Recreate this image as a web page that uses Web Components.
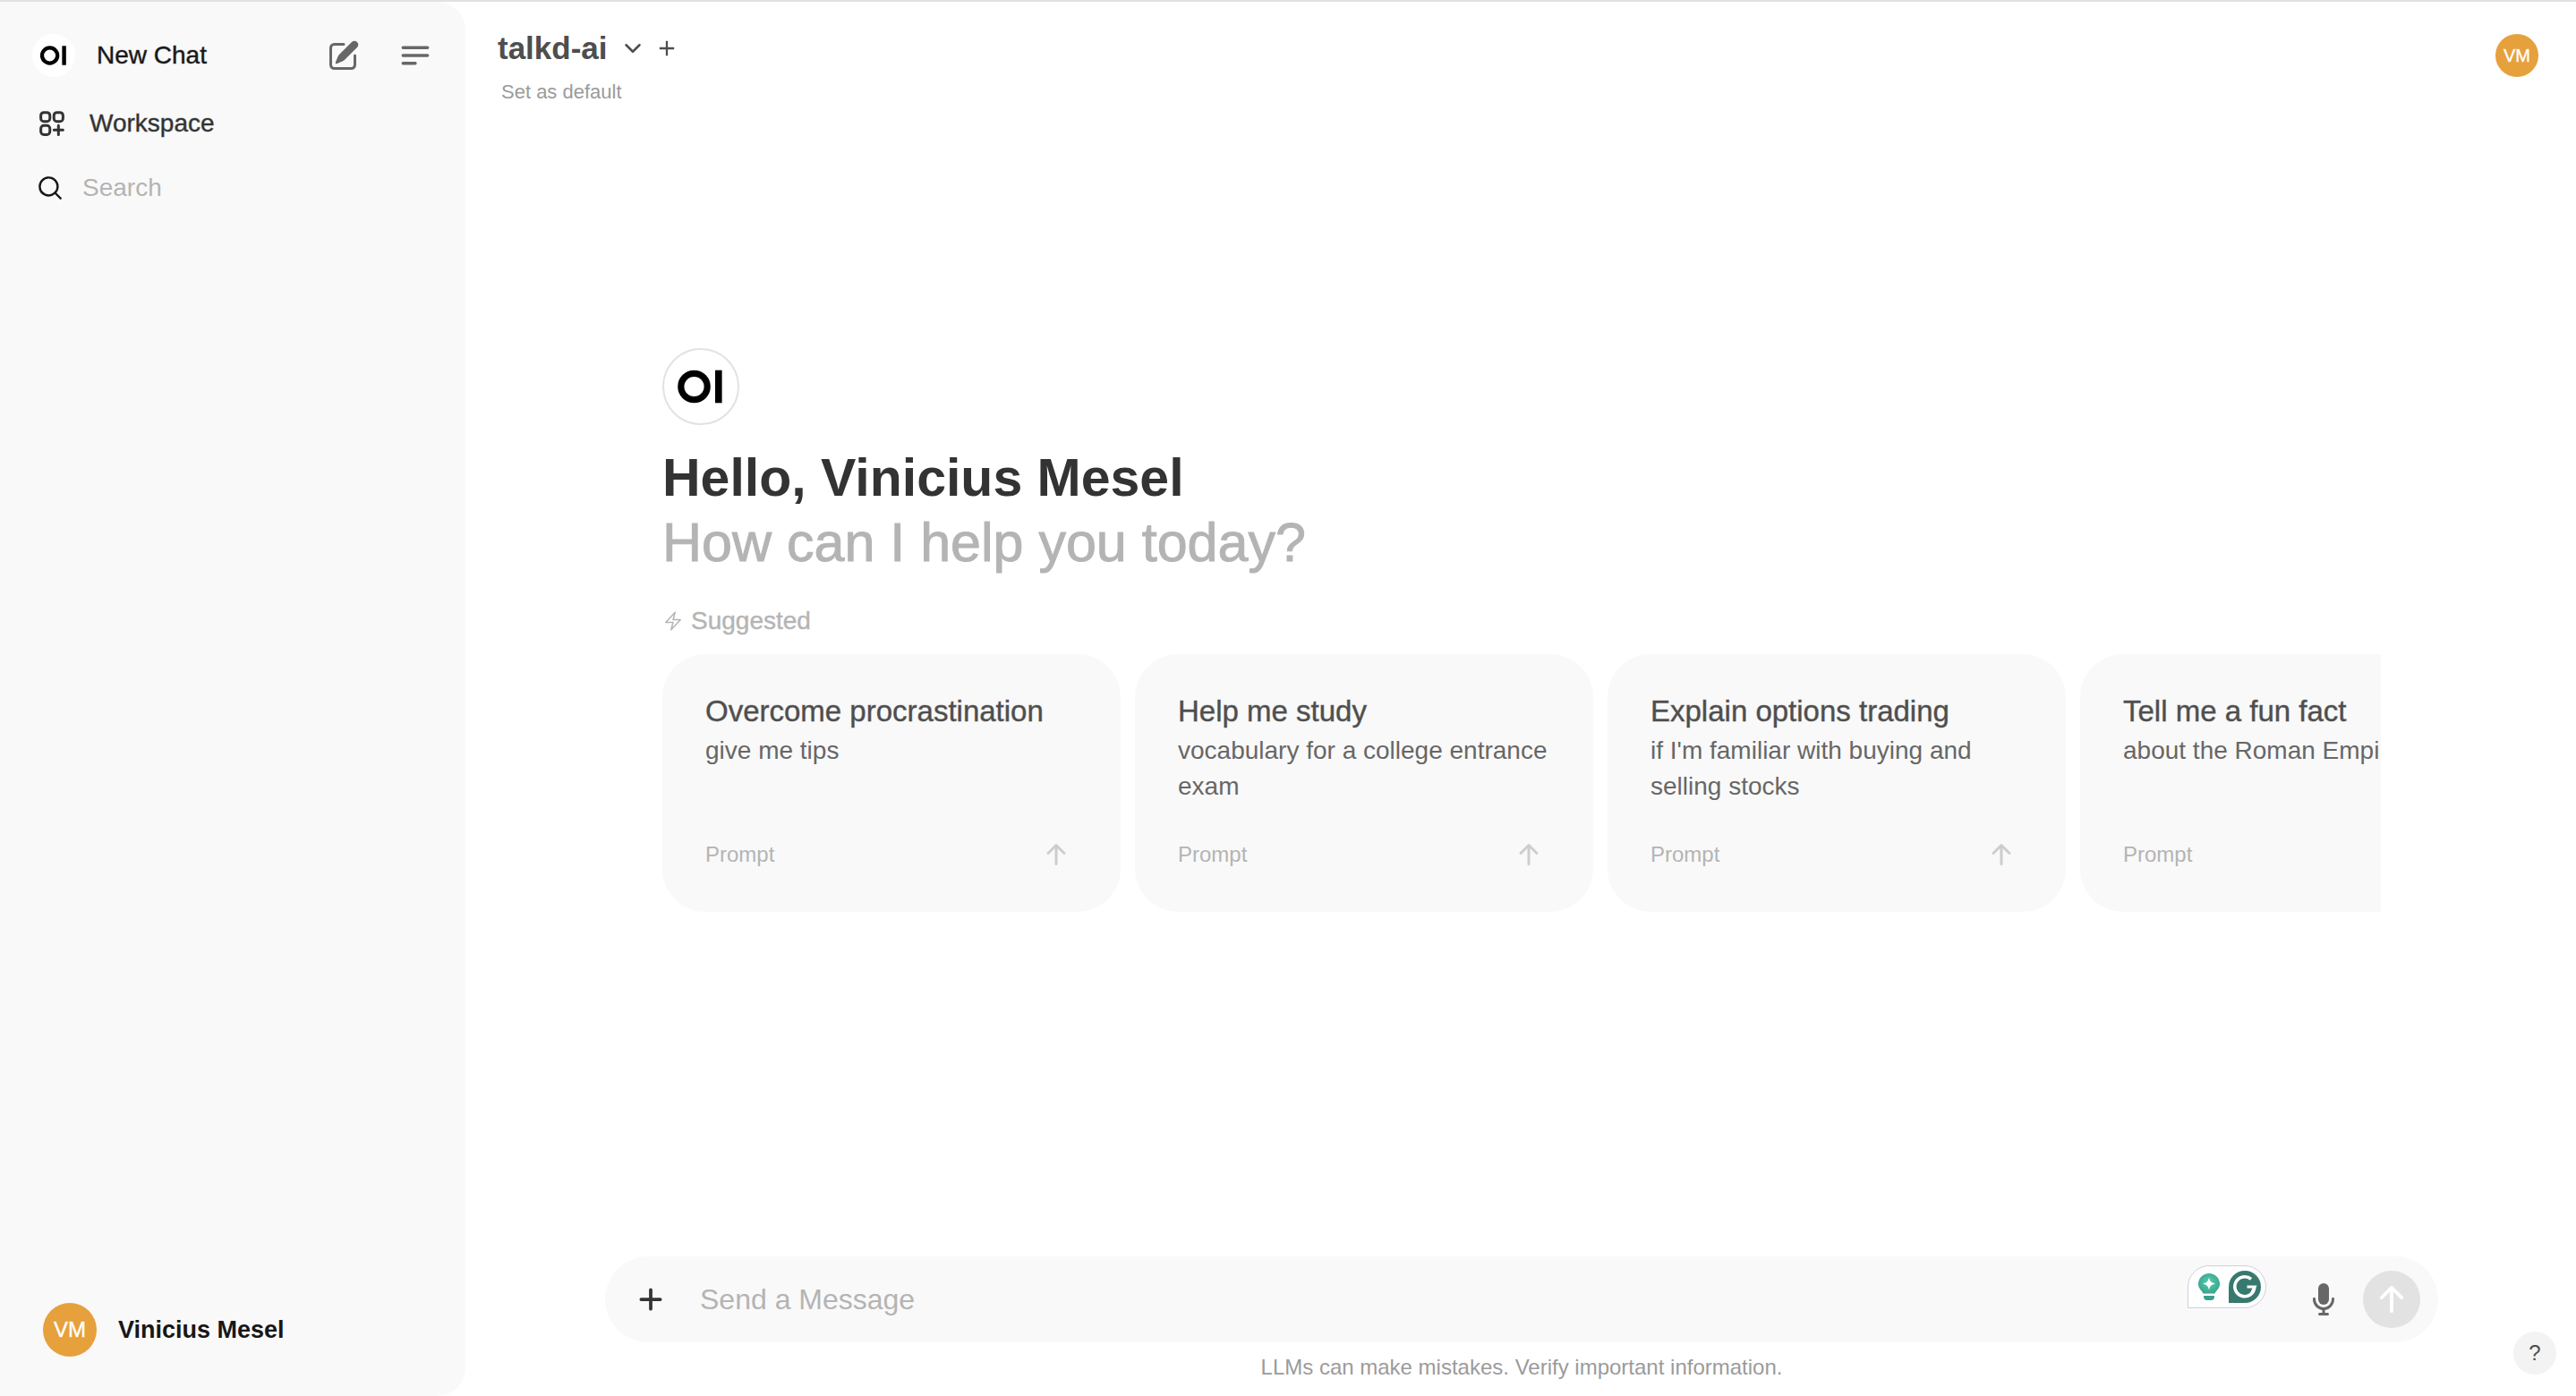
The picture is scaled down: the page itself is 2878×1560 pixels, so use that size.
<!DOCTYPE html>
<html lang="en">
<head>
<meta charset="utf-8">
<title>Open WebUI</title>
<style>
  html, body {
    height: 100%;
    margin: 0;
  }
  body {
    background: white;
    color: #171717;
    font-family: "Liberation Sans", Arial, sans-serif;
    font-size: 28px;
    line-height: 40px;
  }
</style>
</head>
<body>
<chat-app>
  <side-bar slot="sidebar">
    <user-avatar slot="user" size="large">VM</user-avatar>
    <span slot="user">Vinicius Mesel</span>
  </side-bar>
  <model-bar slot="header">
    <span slot="model">talkd-ai</span>
    <user-avatar slot="avatar">VM</user-avatar>
  </model-bar>
  <chat-welcome>
    <span slot="name">Hello, Vinicius Mesel</span>
    <prompt-card><span slot="title">Overcome procrastination</span>give me tips</prompt-card>
    <prompt-card><span slot="title">Help me study</span>vocabulary for a college entrance exam</prompt-card>
    <prompt-card><span slot="title">Explain options trading</span>if I'm familiar with buying and selling stocks</prompt-card>
    <prompt-card><span slot="title">Tell me a fun fact</span>about the Roman Empire</prompt-card>
  </chat-welcome>
  <message-box slot="footer">LLMs can make mistakes. Verify important information.</message-box>
</chat-app>

<script>
// .medium thickens the regular face, Liberation has no 500 weight
const controlStyle = `
  button, input {
    margin: 0;
    padding: 0;
    border: 0;
    background: none;
    color: inherit;
    font: inherit;
    outline: none;
  }
  button {
    display: flex;
    align-items: center;
    justify-content: center;
    cursor: pointer;
  }
  svg {
    display: block;
    flex: none;
  }
  .medium {
    font-weight: 500;
    -webkit-text-stroke: 1px color-mix(in srgb, currentColor 40%, transparent);
  }
`;

function defineElement(name, html) {
  const template = document.createElement("template");
  template.innerHTML = html;

  window.customElements.define(name, class extends HTMLElement {
    constructor() {
      super();
      this.attachShadow({ mode: "open" });
      this.shadowRoot.appendChild(template.content.cloneNode(true));
    }
  });
}

defineElement("chat-app", `
  <style>
    :host {
      display: flex;
      box-sizing: border-box;
      min-height: 100vh;
      border-top: 2px solid #e2e2e2;
    }
    main {
      flex: 1;
      min-width: 0;
      display: flex;
      flex-direction: column;
      padding-left: 2px;
    }
  </style>
  <slot name="sidebar"></slot>
  <main>
    <slot name="header"></slot>
    <slot></slot>
    <slot name="footer"></slot>
  </main>
`);

defineElement("user-avatar", `
  <style>
    :host {
      display: flex;
      flex: none;
      align-items: center;
      justify-content: center;
      width: 48px;
      height: 48px;
      border-radius: 50%;
      background: #e6a03c;
      color: white;
      font-size: 20px;
      font-weight: 500;
      -webkit-text-stroke: 1px color-mix(in srgb, currentColor 40%, transparent);
    }
    :host([size=large]) {
      width: 60px;
      height: 60px;
      font-size: 24px;
    }
  </style>
  <slot></slot>
`);

defineElement("oi-logo", `
  <style>
    :host {
      display: block;
      box-sizing: border-box;
      flex: none;
      width: 48px;
      height: 48px;
      border-radius: 50%;
      background: white;
    }
    :host([size=large]) {
      width: 86px;
      height: 86px;
      border: 2px solid #e2e2e2;
    }
    svg {
      display: block;
      width: 100%;
      height: 100%;
    }
  </style>
  <svg viewBox="0 0 82 82" aria-hidden="true">
    <circle cx="33.500" cy="41" r="14.700" fill="none" stroke="black" stroke-width="7.200"/>
    <rect x="57" y="22.700" width="7.600" height="36.600"/>
  </svg>
`);

defineElement("side-bar", `
  <style>
    ${controlStyle}
    :host {
      display: flex;
      flex-direction: column;
      flex: none;
      box-sizing: border-box;
      width: 520px;
      padding: 24px 32px 32px 36px;
      border-radius: 0 32px 32px 0;
      background: #f9f9f9;
    }
    .top {
      display: flex;
      align-items: center;
      height: 72px;
      margin-bottom: 4px;
      color: #676767;
    }
    .new {
      display: flex;
      flex: 1;
      align-items: center;
      gap: 24px;
      color: #171717;
      text-decoration: none;
    }
    .top button {
      width: 48px;
      height: 48px;
    }
    .tools {
      display: flex;
      gap: 32px;
    }
    .row {
      display: flex;
      align-items: center;
      height: 72px;
      padding-left: 4px;
    }
    .workspace {
      gap: 24px;
      color: #333;
      text-decoration: none;
    }
    .search {
      gap: 20px;
    }
    .search input {
      flex: 1;
      min-width: 0;
    }
    .search input::placeholder {
      color: #b4b4b4;
    }
    .user {
      justify-content: flex-start;
      margin-top: auto;
      padding: 12px;
      gap: 24px;
      color: #171717;
      font-size: 27px;
      font-weight: 600;
    }
  </style>
  <div class="top">
    <a class="new medium" href="#new"><oi-logo></oi-logo>New Chat</a>
    <div class="tools">
      <button aria-label="New chat">
        <svg width="40" height="40" viewBox="0 0 20 20" fill="currentColor">
          <path d="M5.433 13.917l1.262-3.155A4 4 0 017.580 9.420l6.920-6.918a2.121 2.121 0 013 3l-6.920 6.918c-.383.383-.84.685-1.343.886l-3.154 1.262a.5.5 0 01-.65-.65z"/>
          <path d="M3.500 5.750c0-.69.56-1.250 1.250-1.250H10A.75.75 0 0010 3H4.750A2.750 2.750 0 002 5.750v9.500A2.750 2.750 0 004.750 18h9.500A2.750 2.750 0 0017 15.250V10a.75.75 0 00-1.500 0v5.250c0 .69-.56 1.250-1.250 1.250h-9.500c-.69 0-1.250-.56-1.250-1.250v-9.500z"/>
        </svg>
      </button>
      <button aria-label="Toggle sidebar">
        <svg width="40" height="40" viewBox="0 0 24 24" fill="none" stroke="currentColor" stroke-width="2" stroke-linecap="round">
          <path d="M3.750 6.750h16.500M3.750 12h16.500m-16.500 5.250H12"/>
        </svg>
      </button>
    </div>
  </div>
  <a class="row workspace medium" href="#workspace">
    <svg width="36" height="36" viewBox="0 0 24 24" fill="none" stroke="currentColor" stroke-width="2" stroke-linecap="round" stroke-linejoin="round">
      <path d="M13.500 16.875h3.375m0 0h3.375m-3.375 0V13.500m0 3.375v3.375M6 10.500h2.250a2.250 2.250 0 0 0 2.250-2.250V6a2.250 2.250 0 0 0-2.250-2.250H6A2.250 2.250 0 0 0 3.750 6v2.250A2.250 2.250 0 0 0 6 10.500Zm0 9.750h2.250A2.250 2.250 0 0 0 10.500 18v-2.250a2.250 2.250 0 0 0-2.250-2.250H6a2.250 2.250 0 0 0-2.250 2.250V18A2.250 2.250 0 0 0 6 20.250Zm9.750-9.750H18a2.250 2.250 0 0 0 2.250-2.250V6A2.250 2.250 0 0 0 18 3.750h-2.250A2.250 2.250 0 0 0 13.500 6v2.250a2.250 2.250 0 0 0 2.250 2.250Z"/>
    </svg>
    Workspace
  </a>
  <label class="row search">
    <svg width="32" height="32" viewBox="0 0 20 20" fill="currentColor" fill-rule="evenodd">
      <path d="M9 3.500a5.500 5.500 0 100 11 5.500 5.500 0 000-11zM2 9a7 7 0 1112.452 4.391l3.328 3.329a.75.75 0 11-1.060 1.060l-3.329-3.328A7 7 0 012 9z"/>
    </svg>
    <input type="text" placeholder="Search" aria-label="Search">
  </label>
  <button class="user"><slot name="user"></slot></button>
`);

defineElement("model-bar", `
  <style>
    ${controlStyle}
    :host {
      display: flex;
      justify-content: space-between;
      padding: 28px 42px 0 34px;
    }
    .model {
      display: flex;
      align-items: center;
      height: 48px;
      color: #4e4e4e;
    }
    .picker {
      gap: 16px;
      font-size: 35px;
      font-weight: 600;
    }
    .add {
      width: 28px;
      height: 28px;
      margin-left: 12px;
    }
    .default {
      margin-top: 9px;
      padding-left: 4px;
      color: #9b9b9b;
      font-size: 22px;
      line-height: 32px;
    }
    slot[name=avatar] {
      display: block;
      padding-top: 8px;
    }
  </style>
  <div>
    <div class="model">
      <button class="picker">
        <slot name="model"></slot>
        <svg width="24" height="24" viewBox="0 0 24 24" fill="none" stroke="currentColor" stroke-width="2.500" stroke-linecap="round" stroke-linejoin="round">
          <path d="M19.500 8.250l-7.500 7.500-7.500-7.500"/>
        </svg>
      </button>
      <button class="add" aria-label="Add model">
        <svg width="28" height="28" viewBox="0 0 24 24" fill="none" stroke="currentColor" stroke-width="2">
          <path d="M12 5v14m7-7H5"/>
        </svg>
      </button>
    </div>
    <button class="default">Set as default</button>
  </div>
  <slot name="avatar"></slot>
`);

defineElement("chat-welcome", `
  <style>
    ${controlStyle}
    :host {
      display: flex;
      flex: 1;
      flex-direction: column;
      justify-content: center;
      box-sizing: border-box;
      width: 100%;
      max-width: 1920px;
      margin: 0 auto;
      padding-bottom: 116px;
    }
    h1 {
      margin: 23px 0 32px;
      color: #b4b4b4;
      font-size: 61px;
      font-weight: 500;
      line-height: 72px;
      -webkit-text-stroke: 1px currentColor;
    }
    h1 slot {
      display: block;
      color: #333;
      font-size: 59px;
      font-weight: 600;
      -webkit-text-stroke: 0;
    }
    h2 {
      display: flex;
      align-items: center;
      gap: 8px;
      margin: 0 0 17px;
      color: #b4b4b4;
      font-size: 28px;
    }
    .cards {
      display: flex;
      gap: 16px;
      overflow: hidden;
    }
  </style>
  <oi-logo size="large"></oi-logo>
  <h1><slot name="name"></slot>How can I help you today?</h1>
  <h2 class="medium">
    <svg width="24" height="24" viewBox="0 0 24 24" fill="none" stroke="currentColor" stroke-width="1.500" stroke-linejoin="round">
      <path d="m3.750 13.500 10.500-11.250L12 10.500h8.250L9.750 21.750 12 13.500H3.750Z"/>
    </svg>
    Suggested
  </h2>
  <div class="cards"><slot></slot></div>
`);

defineElement("prompt-card", `
  <style>
    ${controlStyle}
    :host {
      display: block;
      flex: 0 0 512px;
    }
    .card {
      flex-direction: column;
      align-items: stretch;
      justify-content: flex-start;
      box-sizing: border-box;
      width: 100%;
      min-height: 288px;
      padding: 44px 48px 48px;
      border-radius: 48px;
      background: #f9f9f9;
      color: #676767;
      text-align: left;
    }
    .title {
      margin-bottom: 4px;
      color: #4e4e4e;
      font-size: 33px;
    }
    .foot {
      display: flex;
      align-items: center;
      justify-content: space-between;
      margin-top: auto;
      padding-right: 8px;
      color: #b4b4b4;
      font-size: 24px;
      line-height: 32px;
    }
    svg {
      color: #cdcdcd;
    }
  </style>
  <button class="card">
    <span class="title medium"><slot name="title"></slot></span>
    <span><slot></slot></span>
    <span class="foot">
      Prompt
      <svg width="32" height="32" viewBox="0 0 16 16" fill="currentColor">
        <path d="M8 14a.75.75 0 0 1-.75-.75V4.560L4.030 7.780a.75.75 0 0 1-1.060-1.060l4.500-4.500a.75.75 0 0 1 1.060 0l4.500 4.500a.75.75 0 0 1-1.060 1.060L8.750 4.560v8.690A.75.75 0 0 1 8 14Z"/>
      </svg>
    </span>
  </button>
`);

defineElement("writing-badge", `
  <style>
    :host {
      display: flex;
      align-items: center;
      box-sizing: border-box;
      width: 88px;
      height: 48px;
      padding-left: 10px;
      gap: 9px;
      border: 1px solid #cfcfe0;
      border-radius: 24px 24px 24px 0;
      background: white;
    }
    svg {
      display: block;
    }
  </style>
  <svg width="26" height="32" viewBox="0 0 26 32" aria-hidden="true">
    <defs>
      <radialGradient id="glow" cx=".5" cy=".45" r=".6">
        <stop offset="0" stop-color="#55d0b0"/>
        <stop offset="1" stop-color="#3a9f8a"/>
      </radialGradient>
    </defs>
    <path fill="url(#glow)" d="M13 1a12 12 0 0 1 12 12c0 5-4 7-5.500 10.500h-13C5 20 1 18 1 13A12 12 0 0 1 13 1Z"/>
    <path fill="#3a9f8a" d="M7 26h12v1a4 4 0 0 1-4 4h-4a4 4 0 0 1-4-4Z"/>
    <path fill="white" d="M13 5.500c1 4.500 2.500 6 7 7-4.500 1-6 2.500-7 7-1-4.500-2.500-6-7-7 4.500-1 6-2.500 7-7Z"/>
  </svg>
  <svg width="36" height="36" viewBox="0 0 36 36" aria-hidden="true">
    <path fill="#37796e" d="M18 0a18 18 0 0 1 0 36H0V18A18 18 0 0 1 18 0Z"/>
    <path fill="none" stroke="white" stroke-width="3.600" d="M25 9.400a11 11 0 1 0 3.800 9"/>
    <path fill="none" stroke="white" stroke-width="3.200" d="M20.500 18H29l-3 6.500"/>
  </svg>
`);

defineElement("message-box", `
  <style>
    ${controlStyle}
    :host {
      display: block;
      box-sizing: border-box;
      width: 100%;
      max-width: 2048px;
      margin: 0 auto;
      padding-bottom: 16px;
    }
    form {
      position: relative;
      display: flex;
      align-items: center;
      height: 96px;
      box-sizing: border-box;
      padding: 0 20px 0 31px;
      border-radius: 48px;
      background: #f9f9f9;
    }
    .add {
      color: #333;
    }
    input {
      flex: 1;
      min-width: 0;
      margin-left: 35px;
      font-size: 32px;
    }
    input::placeholder {
      color: #b4b4b4;
    }
    .mic {
      margin: 0 24px;
      color: #676767;
    }
    .send {
      width: 64px;
      height: 64px;
      border-radius: 50%;
      background: #e2e2e2;
      color: white;
    }
    writing-badge {
      position: absolute;
      top: 10px;
      right: 192px;
    }
    p {
      margin: 12px 0 0;
      color: #9b9b9b;
      font-size: 24px;
      line-height: 32px;
      text-align: center;
    }
    .help {
      position: fixed;
      right: 22px;
      bottom: 24px;
      width: 48px;
      height: 48px;
      border-radius: 50%;
      background: #f3f3f3;
      color: #4e4e4e;
      font-size: 24px;
    }
  </style>
  <form>
    <button class="add" type="button" aria-label="More">
      <svg width="40" height="40" viewBox="0 0 16 16" fill="currentColor">
        <path d="M8.750 3.750a.75.75 0 0 0-1.500 0v3.500h-3.500a.75.75 0 0 0 0 1.500h3.500v3.500a.75.75 0 0 0 1.500 0v-3.500h3.500a.75.75 0 0 0 0-1.500h-3.500v-3.500Z"/>
      </svg>
    </button>
    <input type="text" placeholder="Send a Message" aria-label="Send a Message">
    <button class="mic" type="button" aria-label="Record voice">
      <svg width="40" height="40" viewBox="0 0 20 20" fill="currentColor">
        <path d="M7 4a3 3 0 016 0v6a3 3 0 11-6 0V4z"/>
        <path d="M5.500 9.643a.75.75 0 00-1.500 0V10c0 3.060 2.290 5.585 5.250 5.954V17.500h-1.500a.75.75 0 000 1.500h4.500a.75.75 0 000-1.500h-1.500v-1.546A6.001 6.001 0 0016 10v-.357a.75.75 0 00-1.500 0V10a4.500 4.500 0 01-9 0v-.357z"/>
      </svg>
    </button>
    <button class="send" aria-label="Send message">
      <svg width="40" height="40" viewBox="0 0 16 16" fill="currentColor">
        <path d="M8 14a.75.75 0 0 1-.75-.75V4.560L4.030 7.780a.75.75 0 0 1-1.060-1.060l4.500-4.500a.75.75 0 0 1 1.060 0l4.500 4.500a.75.75 0 0 1-1.060 1.060L8.750 4.560v8.690A.75.75 0 0 1 8 14Z"/>
      </svg>
    </button>
    <writing-badge></writing-badge>
  </form>
  <p><slot></slot></p>
  <button class="help" aria-label="Help">?</button>
`);
</script>
</body>
</html>
